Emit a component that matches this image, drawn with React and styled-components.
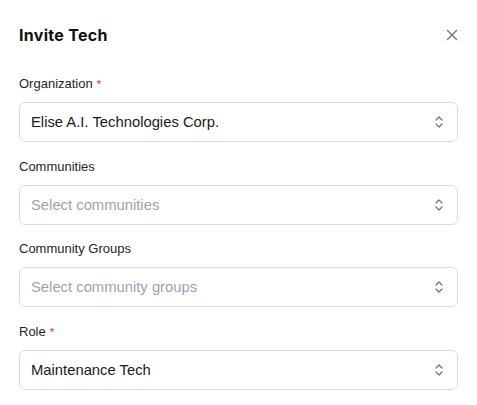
import React from "react";
import styled, { createGlobalStyle } from "styled-components";

const GlobalStyle = createGlobalStyle`
  body {
    margin: 0;
    background: #fff;
    font-family: "Liberation Sans", Arial, sans-serif;
    -webkit-font-smoothing: antialiased;
  }
`;

const Modal = styled.div`
  width: 477px;
  padding: 25px 19px 0 19px;
  box-sizing: border-box;
`;

const Header = styled.div`
  display: flex;
  align-items: center;
  justify-content: space-between;
  height: 20px;
  margin-bottom: 31px;
`;

const Title = styled.h2`
  margin: 0;
  font-family: Inter, "Liberation Sans", sans-serif;
  font-size: 16px;
  font-weight: 700;
  letter-spacing: 0.3px;
  color: #111;
`;

const CloseButton = styled.button`
  border: 0;
  background: none;
  padding: 0;
  margin-right: -1px;
  display: flex;
  color: #6b7280;
  cursor: pointer;
`;

const Field = styled.div`
  display: flex;
  flex-direction: column;
  margin-bottom: 16.7px;
`;

const Label = styled.label`
  display: block;
  height: 16px;
  font-size: 13px;
  line-height: 16px;
  color: #1f1f1f;
  margin-bottom: 10px;
`;

const Star = styled.span`
  color: #dc2626;
  font-size: 11px;
  line-height: 0;
  margin-left: 4px;
  vertical-align: 0;
`;

const SelectBox = styled.div`
  height: 40px;
  box-sizing: border-box;
  border: 1px solid #dcdcdc;
  border-radius: 6px;
  display: flex;
  align-items: center;
  justify-content: space-between;
  padding: 0 12px 0 11px;
  font-size: 14.8px;
  color: ${(p) => (p.$placeholder ? "#9ca3af" : "#1a1a1a")};
`;

const Chevrons = () => (
  <svg width="12" height="14" viewBox="0 0 12 14" fill="none" stroke="#6b7280" strokeWidth="1.2" strokeLinecap="round" strokeLinejoin="round">
    <path d="M3 5 6 2l3 3" />
    <path d="M3 9l3 3 3-3" />
  </svg>
);

const fields = [
  { label: "Organization", required: true, value: "Elise A.I. Technologies Corp." },
  { label: "Communities", placeholder: "Select communities" },
  { label: "Community Groups", placeholder: "Select community groups" },
  { label: "Role", required: true, value: "Maintenance Tech" },
];

export default function App() {
  return (
    <>
      <GlobalStyle />
      <Modal>
        <Header>
          <Title>Invite Tech</Title>
          <CloseButton aria-label="Close">
            <svg width="14" height="14" viewBox="0 0 14 14" fill="none" stroke="currentColor" strokeWidth="1.4" strokeLinecap="round">
              <path d="M2.5 2.5l9 9M11.5 2.5l-9 9" />
            </svg>
          </CloseButton>
        </Header>
        {fields.map((f) => (
          <Field key={f.label}>
            <Label>
              {f.label}
              {f.required && <Star>*</Star>}
            </Label>
            <SelectBox $placeholder={!f.value}>
              <span>{f.value || f.placeholder}</span>
              <Chevrons />
            </SelectBox>
          </Field>
        ))}
      </Modal>
    </>
  );
}
